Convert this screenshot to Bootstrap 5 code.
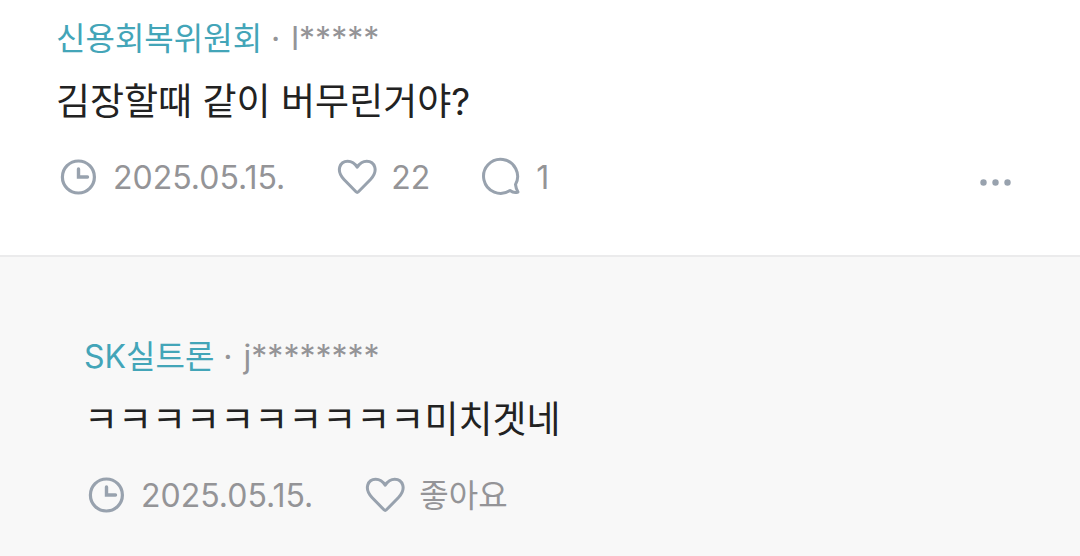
<!DOCTYPE html>
<html lang="ko">
<head>
<meta charset="utf-8">
<meta name="viewport" content="width=device-width, initial-scale=1">
<title>댓글</title>
<link href="https://cdn.jsdelivr.net/npm/bootstrap@5.3.0/dist/css/bootstrap.min.css" rel="stylesheet">
<style>
body{font-family:Inter,"Noto Sans CJK KR",sans-serif;background:#f8f8f8;color:#222}
.comment{padding:17px 56px 54px;background:#fff;border-bottom:2px solid #ebebec}
.reply{padding:78px 56px 36px 84px}
.byline{font-size:32px;line-height:44px;color:#949497}
.company{color:#43a5b8}
.author{margin-left:2px}
.message{font-size:37px;line-height:52px;margin:15px 0 0}
.meta{font-size:32px;line-height:44px;color:#949497;margin-top:27px}
.meta .btn{font-size:32px;line-height:44px;color:inherit}
.icon{fill:none;stroke:#98a2ae;stroke-width:3;stroke-linejoin:round;stroke-linecap:round;display:block;margin-bottom:2px}
.icon-dots{fill:#98a2ae;display:block}
.stat{gap:13px;margin-right:49px}
</style>
</head>
<body>
<svg class="d-none" aria-hidden="true">
<symbol id="clock" viewBox="0 0 44 44"><circle cx="22.400" cy="22" r="16" stroke-width="3.2"/><path d="M22.500 14v8h9" stroke-width="3.4" stroke-linejoin="miter"/></symbol>
<symbol id="heart" viewBox="0 0 44 44"><path d="M22 36.800Q23.200 38 24.400 36.800L36.500 24.500C45 15.500 40.500 6.200 32.800 6.200C28.500 6.200 25.500 8.500 23.200 12.200C21 8.500 18 6.200 13.600 6.200C6 6.200 1.500 15.500 10 24.500Z"/></symbol>
<symbol id="bubble" viewBox="0 0 44 44"><path d="M31 35.500A17 17 0 1 1 36.500 29.500Q37 34 39 37Q35 38.500 31 35.500Z"/></symbol>
</svg>
<main>
<article class="comment">
<div class="byline"><a href="#" class="company text-decoration-none">신용회복위원회</a> · <span class="author">l*****</span></div>
<p class="message">김장할때 같이 버무린거야?</p>
<div class="meta d-flex align-items-center">
<span class="stat d-flex align-items-center"><svg class="icon" width="44" height="44"><use href="#clock"/></svg><time datetime="2025-05-15">2025.05.15.</time></span>
<button type="button" class="stat btn p-0 border-0 d-flex align-items-center" aria-label="좋아요 22"><svg class="icon" width="44" height="44"><use href="#heart"/></svg>22</button>
<button type="button" class="stat btn p-0 border-0 d-flex align-items-center" aria-label="댓글 1"><svg class="icon" width="44" height="44"><use href="#bubble"/></svg>1</button>
<button type="button" class="btn p-0 border-0 ms-auto" aria-label="더보기"><svg class="icon-dots" width="56" height="44" viewBox="0 0 56 44"><circle cx="15.500" cy="26.500" r="3.200"/><circle cx="27.500" cy="26.500" r="3.200"/><circle cx="39.500" cy="26.500" r="3.200"/></svg></button>
</div>
</article>
<article class="reply">
<div class="byline"><a href="#" class="company text-decoration-none">SK실트론</a> · <span class="author">j********</span></div>
<p class="message">ㅋㅋㅋㅋㅋㅋㅋㅋㅋㅋ미치겟네</p>
<div class="meta d-flex align-items-center">
<span class="stat d-flex align-items-center"><svg class="icon" width="44" height="44"><use href="#clock"/></svg><time datetime="2025-05-15">2025.05.15.</time></span>
<button type="button" class="stat btn p-0 border-0 d-flex align-items-center"><svg class="icon" width="44" height="44"><use href="#heart"/></svg>좋아요</button>
</div>
</article>
</main>
<script src="https://cdn.jsdelivr.net/npm/bootstrap@5.3.0/dist/js/bootstrap.bundle.min.js"></script>
</body>
</html>
